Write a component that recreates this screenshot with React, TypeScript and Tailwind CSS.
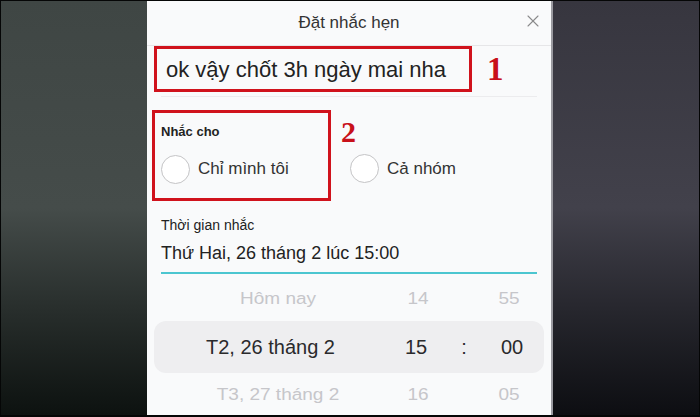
import { X } from "lucide-react"

const sans = { fontFamily: '"Liberation Sans", Arial, sans-serif' }
const serif = { fontFamily: '"Liberation Serif", "Times New Roman", serif' }

function Radio({ label }: { label: string }) {
  return (
    <div className="flex items-center gap-[8px]">
      <span className="h-[29px] w-[29px] rounded-full border-[1.5px] border-[#c4c4c6] bg-white" />
      <span className="text-[17px] text-[#333]">{label}</span>
    </div>
  )
}

function WheelRow({
  date,
  hour,
  minute,
  selected,
}: {
  date: string
  hour: string
  minute: string
  selected?: boolean
}) {
  if (selected) {
    return (
      <div className="mx-[7px] flex h-[52px] items-center rounded-[12px] bg-[#eeeef0] text-[20px] text-[#2a2a2c]">
        <span className="w-[241px] pl-[52px]">{date}</span>
        <span className="w-[42px] text-center">{hour}</span>
        <span className="w-[54px] text-center">:</span>
        <span className="w-[42px] text-center">{minute}</span>
      </div>
    )
  }
  return (
    <div className="flex h-[44px] scale-y-[0.82] items-center text-[19px] text-[#c6c6ca]">
      <span className="ml-[6px] w-[250px] text-center">{date}</span>
      <span className="w-[30px] text-center">{hour}</span>
      <span className="ml-[61px] w-[30px] text-center">{minute}</span>
    </div>
  )
}

export default function App() {
  return (
    <div className="h-[417px] w-[700px] bg-[#050606] px-px pt-px pb-[2px]" style={sans}>
      <div className="flex h-full">
        <div className="w-[146px] bg-gradient-to-b from-[#3f4644] via-[#454c4a] to-[#0d1210]" />
        <div className="w-[404px] overflow-hidden bg-[#f9fafb]">
          {/* header */}
          <div className="relative flex h-[45px] items-center justify-center border-b border-[#e6e6e8]">
            <span className="text-[17px] text-[#333]">Đặt nhắc hẹn</span>
            <X className="absolute right-[8px] top-[10px] h-[20px] w-[20px] text-[#8a8a8c]" strokeWidth={1.3} />
          </div>

          {/* message */}
          <div className="flex items-center pl-[7px]">
            <div className="flex h-[46px] w-[318px] items-center border-[3px] border-[#d0121c] pl-[9px] text-[22px] text-[#222]">
              ok vậy chốt 3h ngày mai nha
            </div>
            <span className="ml-[15px] text-[33px] font-bold leading-none text-[#c8101a]" style={serif}>
              1
            </span>
          </div>
          <div className="mx-[14px] mt-[4px] border-b border-[#ececee]" />

          {/* remind for */}
          <div className="mt-[13px] flex items-start pl-[5px]">
            <div className="flex h-[91px] w-[179px] flex-col border-[3px] border-[#d0121c] pl-[6px] pt-[9px]">
              <span className="text-[13px] font-semibold text-[#222]">Nhắc cho</span>
              <div className="mt-[13px]">
                <Radio label="Chỉ mình tôi" />
              </div>
            </div>
            <span className="ml-[10px] mt-[7px] text-[30px] font-bold leading-none text-[#c8101a]" style={serif}>
              2
            </span>
            <div className="ml-[-6px] mt-[44px]">
              <Radio label="Cả nhóm" />
            </div>
          </div>

          {/* time */}
          <div className="px-[14px] pt-[14px]">
            <div className="text-[14px] text-[#222]">Thời gian nhắc</div>
            <div className="mt-[4px] text-[18px] text-[#222]">Thứ Hai, 26 tháng 2 lúc 15:00</div>
            <div className="mt-[5px] h-[2px] bg-[#4cc6d0]" />
          </div>

          {/* wheel */}
          <div className="mt-[3px] flex flex-col">
            <WheelRow date="Hôm nay" hour="14" minute="55" />
            <WheelRow date="T2, 26 tháng 2" hour="15" minute="00" selected />
            <WheelRow date="T3, 27 tháng 2" hour="16" minute="05" />
          </div>
        </div>
        <div className="w-[2px] bg-[#9a9aa0]" />
        <div className="flex-1 bg-gradient-to-b from-[#37363f] via-[#42414b] to-[#0d0e12]" />
      </div>
    </div>
  )
}
